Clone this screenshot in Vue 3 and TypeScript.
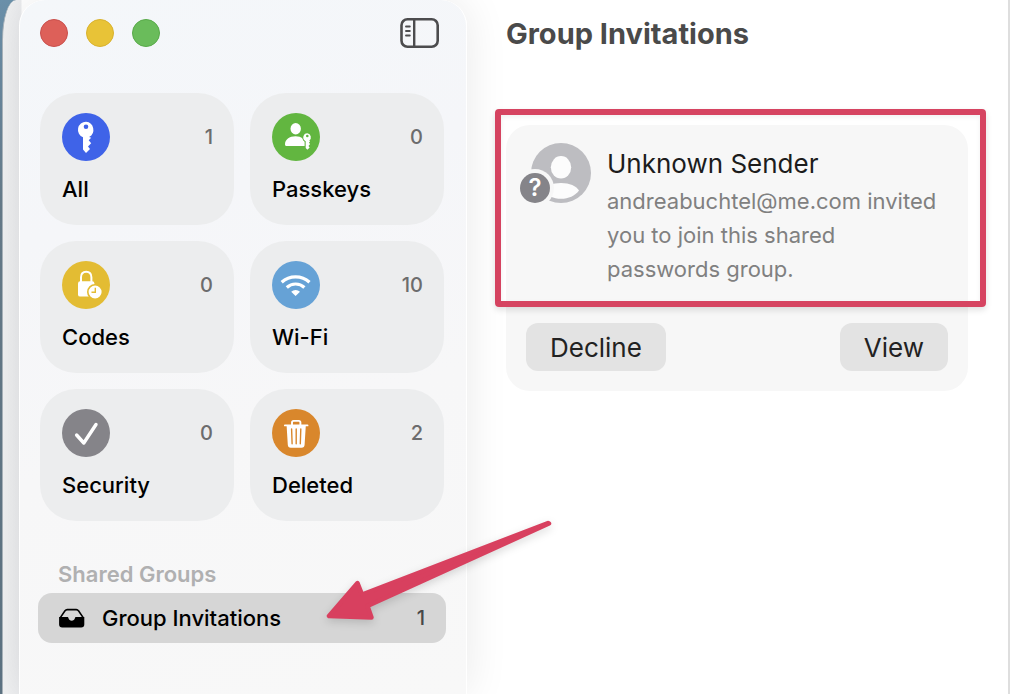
<script setup lang="ts">
import { ref } from 'vue'

type IconName = 'key' | 'passkey' | 'lock' | 'wifi' | 'check' | 'trash'

interface Category {
  label: string
  count: number
  icon: IconName
}

const categories: Category[] = [
  { label: 'All', count: 1, icon: 'key' },
  { label: 'Passkeys', count: 0, icon: 'passkey' },
  { label: 'Codes', count: 0, icon: 'lock' },
  { label: 'Wi-Fi', count: 10, icon: 'wifi' },
  { label: 'Security', count: 0, icon: 'check' },
  { label: 'Deleted', count: 2, icon: 'trash' },
]

const invitationCount = ref(1)
</script>

<template>
  <div class="desktop">
    <div class="window">
      <aside class="sidebar">
        <div class="toolbar">
          <div class="lights">
            <button class="light close" type="button" aria-label="Close"></button>
            <button class="light minimize" type="button" aria-label="Minimize"></button>
            <button class="light zoom" type="button" aria-label="Zoom"></button>
          </div>
          <button class="toggle" type="button" aria-label="Toggle sidebar">
            <svg width="40" height="32" viewBox="0 0 40 32" fill="none" stroke="#4c4c4e">
              <rect x="1.5" y="2.2" width="36.2" height="27.6" rx="6" stroke-width="2.6" />
              <path d="M14.2 2.5V29.5" stroke-width="2.4" />
              <path d="M6 9.5h3.8M6 14h3.8M6 18.5h3.8" stroke-width="1.9" stroke-linecap="round" />
            </svg>
          </button>
        </div>

        <nav class="tiles" aria-label="Categories">
          <button v-for="item in categories" :key="item.label" class="tile" type="button">
            <span class="tile-head">
              <span class="disc" :class="item.icon">
                <svg v-if="item.icon === 'key'" width="48" height="48" viewBox="0 0 48 48" fill="#fff">
                  <path
                    fill-rule="evenodd"
                    d="M24 8.7a8.1 8.1 0 0 0-3 15.6v12.1l3 3.6 4-4-2-2.6 3.2-3.1-2.5-3 2.5-2.5-2.1-.9A8.1 8.1 0 0 0 24 8.7Zm0 2.8a2.3 2.3 0 1 1 0 4.6 2.3 2.3 0 0 1 0-4.6Z"
                  />
                </svg>
                <svg v-else-if="item.icon === 'passkey'" width="48" height="48" viewBox="0 0 48 48" fill="#fff">
                  <ellipse cx="23.7" cy="15.8" rx="5.2" ry="5.7" />
                  <path d="M13 31.2c0-4.5 4.4-7.9 10.5-7.9 3.2 0 5.3.8 7.1 2.1.3 1.4 1 2.5 2 3.1v4.5H14.5c-1 0-1.5-.7-1.5-1.8Z" />
                  <path
                    fill-rule="evenodd"
                    stroke="#62b640"
                    stroke-width="1.4"
                    paint-order="stroke"
                    d="M35.4 20.2a4.2 4.2 0 0 0-1.7 8v6.7l1.6 1.9 2.4-2.3-1.2-1.6 1.6-1.8-1.2-1.4 1.2-1.5-.8-.6a4.2 4.2 0 0 0-1.9-7.4Z"
                  />
                  <circle cx="35.3" cy="23" r="1.3" fill="#62b640" />
                </svg>
                <svg v-else-if="item.icon === 'lock'" width="48" height="48" viewBox="0 0 48 48" fill="#fff">
                  <path d="M19 21.5v-5.2c0-3.4 2-5.6 5.2-5.6s5.2 2.2 5.2 5.6v5.2" fill="none" stroke="#fff" stroke-width="2" />
                  <rect x="16" y="20.2" width="16.4" height="15.4" rx="2.2" />
                  <circle cx="33.1" cy="31" r="7.3" stroke="#e3bc33" stroke-width="1.6" />
                  <path d="M33.3 26.8v4.4h-3.8" fill="none" stroke="#e3bc33" stroke-width="1.4" />
                </svg>
                <svg v-else-if="item.icon === 'wifi'" width="48" height="48" viewBox="0 0 48 48" fill="none" stroke="#fff">
                  <path d="M9.7 21.3a20.5 20.5 0 0 1 27.8 0" stroke-width="3.2" />
                  <path d="M14.8 26.5a12.8 12.8 0 0 1 17.6 0" stroke-width="3.2" />
                  <path d="M23.6 35.1 19.2 30.7a6.4 6.4 0 0 1 8.8 0Z" fill="#fff" stroke="none" />
                </svg>
                <svg v-else-if="item.icon === 'check'" width="48" height="48" viewBox="0 0 48 48" fill="none">
                  <path d="M14.6 26 21.8 34 34 15.5" stroke="#fff" stroke-width="3.4" stroke-linecap="round" stroke-linejoin="round" />
                </svg>
                <svg v-else width="48" height="48" viewBox="0 0 48 48" fill="none" stroke="#fff">
                  <path d="M20 16v-2.5c0-1 .6-1.6 1.6-1.6h5.2c1 0 1.6.6 1.6 1.6V16" stroke-width="1.9" />
                  <path d="M12.9 16.4h22.6" stroke-width="1.9" stroke-linecap="round" />
                  <path d="M14.6 16.5h19.2l-1.2 19.3c-.1 2-1.1 3-3 3h-10.8c-1.9 0-2.9-1-3-3Z" fill="#fff" stroke="none" />
                  <path d="m19.6 20 .5 14.8M24.2 20v14.8M28.8 20l-.5 14.8" stroke="#d9872c" stroke-width="1.4" stroke-linecap="round" />
                </svg>
              </span>
              <span class="count">{{ item.count }}</span>
            </span>
            <span class="tile-label">{{ item.label }}</span>
          </button>
        </nav>

        <h2 class="section">Shared Groups</h2>
        <div class="row-wrap">
          <button class="row" type="button" aria-current="page">
            <svg class="tray" width="28" height="24" viewBox="0 0 28 24">
              <path
                d="M2.3 11.6 7 4.8C7.6 4 8.3 3.6 9.2 3.6h9.1c.9 0 1.7.4 2.2 1.2l4.7 6.8"
                fill="none"
                stroke="#000"
                stroke-width="1.6"
              />
              <path d="M1.1 11.1h8.2c.8 0 1 .5 1.2 1.2.4 1.5 1.6 2.4 3.2 2.4s2.8-.9 3.2-2.4c.2-.7.5-1.2 1.2-1.2h8.2v7.4c0 2-1.1 3-3.1 3h-19c-2 0-3.1-1-3.1-3Z" />
            </svg>
            <span class="row-label">Group Invitations</span>
            <span class="row-count">{{ invitationCount }}</span>
          </button>
          <svg class="arrow" width="240" height="112" viewBox="0 0 240 112" aria-hidden="true">
            <path
              d="M230 10 44 81.500 39.500 70 11 103 53.500 104.500 49.500 93 231 10.500Z"
              fill="#d8405f"
              stroke="#d8405f"
              stroke-width="4.500"
              stroke-linejoin="round"
            />
          </svg>
        </div>
      </aside>

      <main class="detail">
        <h1 class="title">Group Invitations</h1>
        <article class="card">
          <div class="message">
            <div class="avatar">
              <svg width="72" height="62" viewBox="0 0 72 62">
                <circle cx="41" cy="30" r="30" fill="#bdbdc1" />
                <ellipse cx="41" cy="24.300" rx="10.200" ry="11.200" fill="#fcfcfc" />
                <path d="M23 47.500c2.500-4.500 9.500-7.500 18-7.500s15.500 3 18 7.500c-4 5.300-10.500 8.300-18 8.300s-14-3-18-8.300Z" fill="#fcfcfc" />
                <circle cx="15" cy="45" r="19" fill="#f7f7f7" />
              </svg>
              <span class="badge">?</span>
            </div>
            <div class="copy">
              <h2 class="sender">Unknown Sender</h2>
              <p class="text">andreabuchtel@me.com invited you to join this shared passwords group.</p>
            </div>
            <div class="highlight" aria-hidden="true"></div>
          </div>
          <div class="actions">
            <button class="action" type="button">Decline</button>
            <button class="action" type="button">View</button>
          </div>
        </article>
      </main>
    </div>
  </div>
</template>

<style>
body {
  margin: 0;
}
</style>

<style scoped>
.desktop {
  box-sizing: border-box;
  min-height: 100vh;
  padding-left: 2px;
  display: flex;
  background: linear-gradient(#6b91ab, #667b8a 30%, #5d7383);
  font-family: Inter, "Liberation Sans", sans-serif;
  color: #000;
  overflow: hidden;
}

.desktop * {
  box-sizing: border-box;
}

button {
  margin: 0;
  padding: 0;
  border: 0;
  background: none;
  font: inherit;
  color: inherit;
}

h1,
h2,
p {
  margin: 0;
}

svg {
  display: block;
}

.window {
  flex: 1;
  display: flex;
  padding: 0 6px 0 16px;
  border-left: 1px solid #aab4bb;
  border-top-left-radius: 14px 40px;
  background: linear-gradient(90deg, #f0f1f2, #ebecee 18px, #fff 19px);
}

.sidebar {
  position: relative;
  z-index: 1;
  flex: 0 0 448px;
  padding: 17px 20px 40px 18px;
  border: solid #fff;
  border-width: 0 1px;
  border-radius: 26px 26px 0 0;
  background: linear-gradient(165deg, #f4f7fa, #f5f6f9 30%, #f7f7f8 60%, #f8f8f8);
  box-shadow: 0 0 44px rgba(0, 0, 0, 0.09);
}

.toolbar {
  display: flex;
  align-items: center;
  justify-content: space-between;
  height: 32px;
  padding: 0 6px 0 2px;
}

.lights {
  display: flex;
  gap: 18px;
}

.light {
  width: 28px;
  height: 28px;
  border-radius: 50%;
}

.close {
  background: #dd6059;
  border: 1px solid #c94f4c;
}

.minimize {
  background: #e8c337;
  border: 1px solid #d9b22e;
}

.zoom {
  background: #6abc5b;
  border: 1px solid #58aa49;
}

.tiles {
  display: grid;
  grid-template-columns: 1fr 1fr;
  gap: 16px;
  padding: 0 2px;
  margin-top: 44px;
}

.tile {
  display: flex;
  flex-direction: column;
  gap: 14px;
  padding: 20px 21px 22px 22px;
  border-radius: 36px;
  background: #ecedee;
  text-align: left;
}

.tile-head {
  display: flex;
  align-items: center;
  justify-content: space-between;
}

.disc {
  width: 48px;
  height: 48px;
  border-radius: 50%;
}

.key {
  background: #3f63e8;
}

.passkey {
  background: #62b640;
}

.lock {
  background: #e3bc33;
}

.wifi {
  background: #66a2d6;
}

.check {
  background: #858489;
}

.trash {
  background: #d9872c;
}

.count {
  font-size: 20px;
  line-height: 28px;
  font-weight: 500;
  color: #6c6c6d;
}

.tile-label {
  font-size: 22px;
  line-height: 28px;
  font-weight: 500;
}

.section {
  margin: 39px 0 5px 20px;
  font-size: 22px;
  line-height: 28px;
  font-weight: 600;
  color: #b0b0b1;
}

.row-wrap {
  position: relative;
}

.row {
  display: flex;
  align-items: center;
  width: 100%;
  height: 50px;
  padding: 0 21px 0 20px;
  border-radius: 14px;
  background: #d6d6d6;
  text-align: left;
}

.row-label {
  flex: 1;
  margin-left: 16px;
  font-size: 22px;
  line-height: 28px;
  font-weight: 500;
}

.row-count {
  font-size: 20px;
  line-height: 28px;
  font-weight: 500;
  color: #48484a;
}

.arrow {
  position: absolute;
  left: 280px;
  top: -80px;
  filter: drop-shadow(0 3px 4px rgba(0, 0, 0, 0.15));
  pointer-events: none;
}

.detail {
  flex: 1;
  min-width: 0;
  padding: 14px 40px 40px 39px;
  border-right: 2px solid #dedede;
  background: #fff;
}

.title {
  font-size: 29px;
  line-height: 40px;
  font-weight: 700;
  color: #4a4a4a;
}

.card {
  margin-top: 71px;
  border-radius: 24px;
  background: #f7f7f7;
}

.message {
  position: relative;
  display: flex;
  gap: 15px;
  padding: 18px 20px 17px 14px;
}

.avatar {
  position: relative;
  flex: none;
}

.badge {
  position: absolute;
  left: 0;
  top: 30px;
  width: 30px;
  height: 30px;
  border-radius: 50%;
  background: #858489;
  color: #fff;
  font-size: 24px;
  line-height: 30px;
  font-weight: 600;
  text-align: center;
}

.copy {
  display: flex;
  flex-direction: column;
  gap: 3px;
  padding-top: 4px;
}

.sender {
  font-size: 26px;
  line-height: 34px;
  font-weight: 400;
  color: #1c1c1c;
}

.text {
  font-size: 22px;
  line-height: 34px;
  color: #808080;
}

.highlight {
  position: absolute;
  inset: -16px -18px -4px -11px;
  border: 6px solid #d64461;
  border-radius: 4px;
  box-shadow: 0 3px 6px rgba(0, 0, 0, 0.12), inset 0 2px 5px rgba(0, 0, 0, 0.06);
  pointer-events: none;
}

.actions {
  display: flex;
  justify-content: space-between;
  padding: 20px;
}

.action {
  height: 48px;
  padding: 2px 24px 0;
  border-radius: 12px;
  background: #e3e3e3;
  font-size: 26px;
  line-height: 34px;
  color: #222;
}
</style>
